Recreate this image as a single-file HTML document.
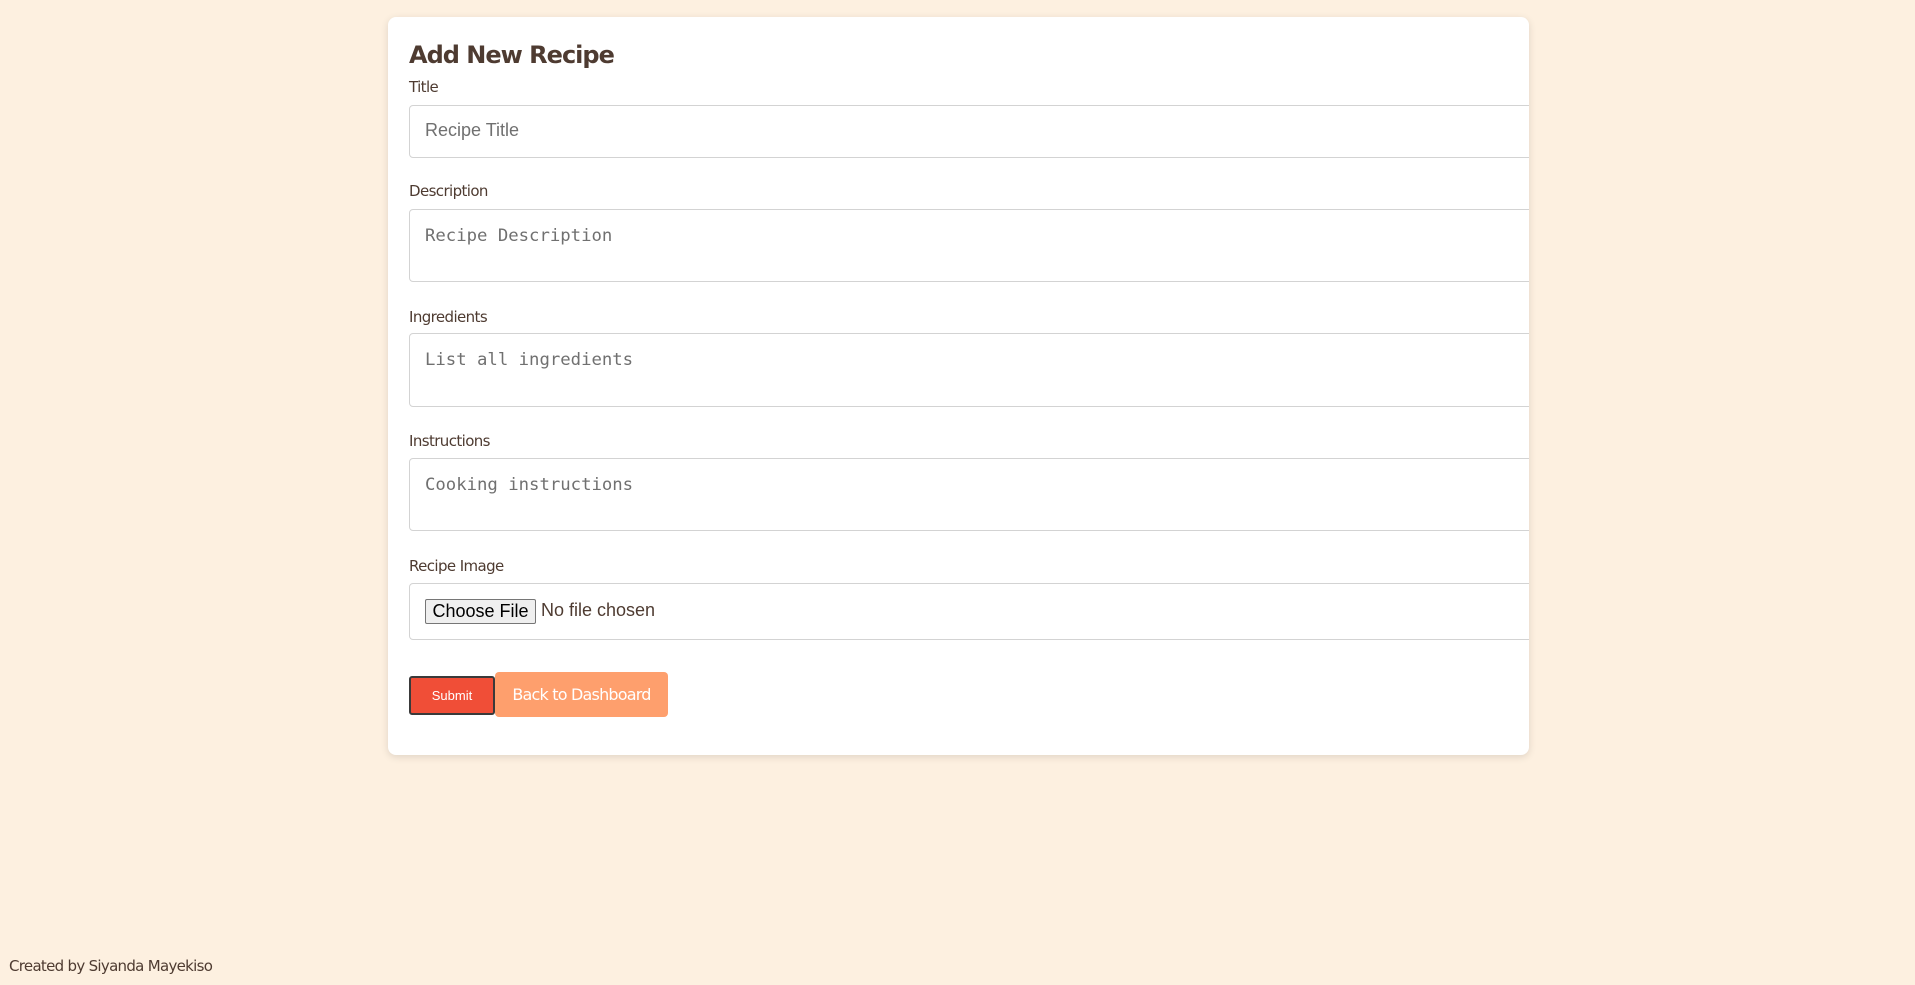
<!DOCTYPE html>
<html><head><meta charset="utf-8"><style>
body{margin:0;width:1915px;height:985px;background:#fdf0e0;font-family:"DejaVu Sans","Liberation Sans",sans-serif;color:#4e3b31;position:relative;overflow:hidden}
.card{position:absolute;left:388px;top:17px;width:1141px;height:738px;background:#fff;border-radius:8px;box-shadow:0 2px 8px rgba(0,0,0,0.12);overflow:hidden}
.a{position:absolute}
h1{position:absolute;left:21px;top:24px;margin:0;font-size:24px;font-weight:bold;letter-spacing:-1px}
.lbl{position:absolute;left:21px;font-size:15px;letter-spacing:-0.6px}
.box{position:absolute;left:21px;width:1160px;border:1px solid #d3d3d3;border-radius:4px;box-sizing:border-box}
.ph{position:absolute;left:15px;color:#707070}
.mono{font-family:"DejaVu Sans Mono","Liberation Mono",monospace;font-size:17.3px}
</style></head><body>
<div class="card">
<h1>Add New Recipe</h1>
<div class="lbl" style="top:61px">Title</div>
<div class="box" style="top:88px;height:53px"><span class="ph" style="top:14px;font-family:'Liberation Sans',sans-serif;font-size:18px">Recipe Title</span></div>
<div class="lbl" style="top:165px">Description</div>
<div class="box" style="top:192px;height:73px"><span class="ph mono" style="top:16px">Recipe Description</span></div>
<div class="lbl" style="top:291px">Ingredients</div>
<div class="box" style="top:316px;height:74px"><span class="ph mono" style="top:16px">List all ingredients</span></div>
<div class="lbl" style="top:415px">Instructions</div>
<div class="box" style="top:441px;height:73px"><span class="ph mono" style="top:16px">Cooking instructions</span></div>
<div class="lbl" style="top:540px">Recipe Image</div>
<div class="box" style="top:566px;height:57px">
<span class="a" style="left:15px;top:15px;width:111px;height:25px;background:#efefef;border:1px solid #767676;border-radius:2px;box-sizing:border-box;font-family:'Liberation Sans',sans-serif;font-size:18px;color:#000;text-align:center;line-height:23px">Choose File</span>
<span class="a" style="left:131px;top:16px;font-family:'Liberation Sans',sans-serif;font-size:18px;color:#4e3b31">No file chosen</span></div>
<div class="a" style="left:21px;top:659px;width:86px;height:39px;background:#f04e37;border:2px solid #3a3a3a;border-radius:3px;box-sizing:border-box;color:#fff;font-family:'Liberation Sans',sans-serif;font-size:13px;text-align:center;line-height:35px">Submit</div>
<div class="a" style="left:107px;top:655px;width:173px;height:45px;background:#fe9f6d;border-radius:4px;color:#fff;font-size:16px;text-align:center;line-height:45px;letter-spacing:-0.8px">Back to Dashboard</div>
</div>
<div class="a" style="left:9px;top:957px;font-size:15px;letter-spacing:-0.7px">Created by Siyanda Mayekiso</div>
</body></html>
